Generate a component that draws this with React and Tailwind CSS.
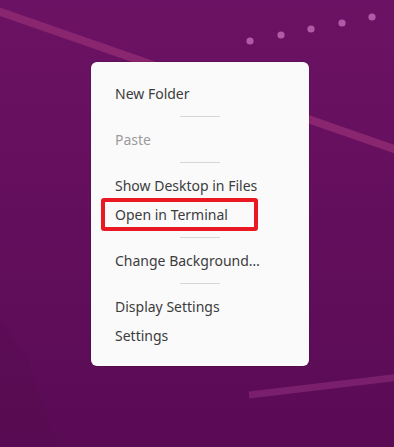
import React from 'react';

const items = [
  { label: 'New Folder', sep: true },
  { label: 'Paste', disabled: true, sep: true },
  { label: 'Show Desktop in Files' },
  { label: 'Open in Terminal', marked: true, sep: true },
  { label: 'Change Background…', sep: true },
  { label: 'Display Settings' },
  { label: 'Settings' },
];

function Wallpaper() {
  return (
    <svg className="absolute inset-0" width="394" height="447" viewBox="0 0 394 447">
      <defs>
        <linearGradient id="bg" x1="0" y1="0" x2="0" y2="1">
          <stop offset="0" stopColor="#6c1264" />
          <stop offset="1" stopColor="#5a0b54" />
        </linearGradient>
      </defs>
      <rect width="394" height="447" fill="url(#bg)" />
      <polygon points="0,320 0,447 58,447 28,360" fill="#520a4d" opacity="0.25" />
      <line x1="-5" y1="10" x2="400" y2="151" stroke="#89266f" strokeWidth="8" />
      <line x1="249" y1="395" x2="400" y2="377" stroke="#7a1f6c" strokeWidth="7" />
      {[[250, 41], [281, 35], [311, 29], [342, 23], [372, 17]].map(([cx, cy]) => (
        <circle key={cx} cx={cx} cy={cy} r="3.6" fill="#b15ba6" />
      ))}
    </svg>
  );
}

export default function App() {
  return (
    <div className="relative w-[394px] h-[447px] overflow-hidden" style={{ fontFamily: '"Noto Sans", "Open Sans", sans-serif' }}>
      <Wallpaper />
      <div className="relative pt-[62px] pl-[91px]">
        <div className="w-[218px] rounded-[6px] bg-[#fafafa] pt-[17px] pb-[16px] shadow-[0_0_0_1px_rgba(0,0,0,0.08)]">
          {items.map((it) => (
            <div key={it.label}>
              <div className="relative h-[29px] flex items-center pl-[24px]">
                <span className={`text-[14px] ${it.disabled ? 'text-[#9b9b9b]' : 'text-[#3c3c3c]'}`}>{it.label}</span>
                {it.marked && (
                  <div className="absolute left-[10px] top-[-2px] w-[157px] h-[33px] border-[4px] border-[#ea1823] rounded-[3px]" />
                )}
              </div>
              {it.sep && (
                <div className="h-[17px] flex items-center justify-center">
                  <div className="w-[40px] h-px bg-[#d6d6d6]" />
                </div>
              )}
            </div>
          ))}
        </div>
      </div>
    </div>
  );
}
